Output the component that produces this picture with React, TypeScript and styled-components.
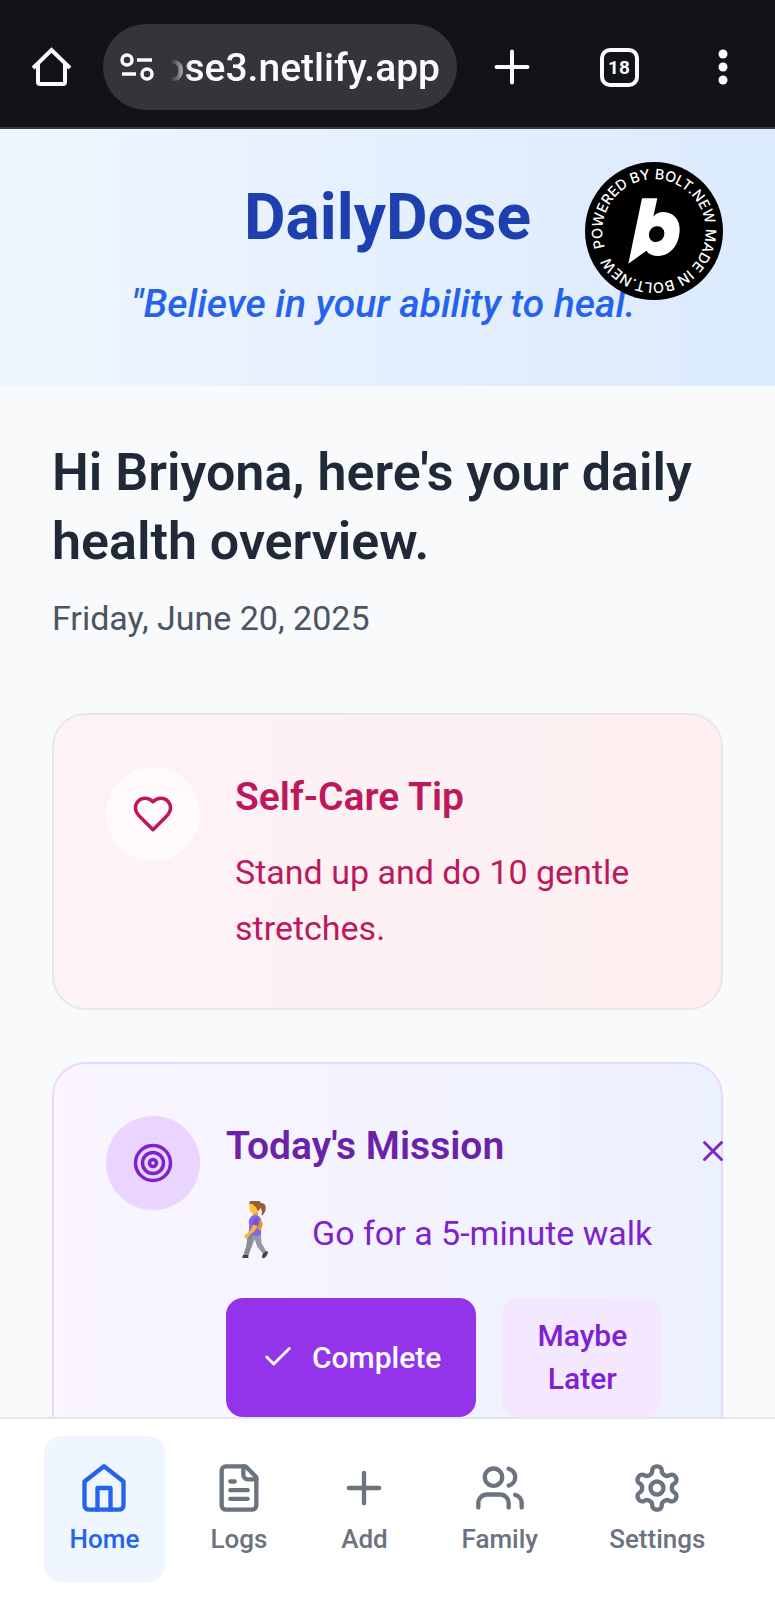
import React from "react";
import styled, { createGlobalStyle, css } from "styled-components";

const GlobalStyle = createGlobalStyle`
  *, *::before, *::after { box-sizing: border-box; }
  html, body { margin: 0; background: #f9fafb; }
  body, button, input { font-family: Roboto, "Liberation Sans", sans-serif; }
  h1, h2, h3, p { margin: 0; }
  button { border: 0; padding: 0; background: none; cursor: pointer; }
  svg { display: block; flex-shrink: 0; }
`;

const Screen = styled.div`
  display: flex;
  flex-direction: column;
  height: 100vh;
  overflow: hidden;
`;

/* Browser toolbar */

const Toolbar = styled.header`
  display: flex;
  align-items: center;
  flex-shrink: 0;
  padding: 24px 0 17px;
  background: #121318;
  border-bottom: 2px solid #393a40;
  color: #fbfaff;
`;

const ToolButton = styled.button<{ $width: number }>`
  display: flex;
  align-items: center;
  justify-content: center;
  flex-shrink: 0;
  width: ${(p) => p.$width}px;
  height: 86px;
  color: inherit;
`;

const AddressBar = styled.label`
  display: flex;
  align-items: center;
  flex: 1;
  min-width: 0;
  height: 86px;
  padding: 0 17px;
  gap: 17px;
  border-radius: 43px;
  background: #343539;
`;

const AddressClip = styled.span`
  display: flex;
  justify-content: flex-end;
  flex: 1;
  min-width: 0;
  overflow: hidden;
  mask-image: linear-gradient(to right, transparent 0, #000 20px);
`;

const AddressInput = styled.input`
  flex: 0 0 480px;
  width: 480px;
  border: 0;
  padding: 2px 0 0;
  outline: 0;
  background: none;
  color: inherit;
  font-size: 39px;
  line-height: 52px;
  font-weight: 500;
  text-align: right;
`;

const TabCount = styled.span`
  display: flex;
  align-items: center;
  justify-content: center;
  width: 39px;
  height: 39px;
  border: 4px solid currentColor;
  border-radius: 10px;
  font-size: 19px;
  font-weight: 700;
`;

/* Page */

const Page = styled.div`
  flex: 1;
  min-height: 0;
  overflow-y: auto;
  scrollbar-width: none;
  background: #f9fafb;
`;

const Banner = styled.div`
  position: relative;
  display: flex;
  flex-direction: column;
  gap: 17px;
  padding: 50px 52px 52px;
  background: linear-gradient(to right, #eff6ff, #dbeafe);
  text-align: center;
`;

const Brand = styled.h1`
  color: #1e40af;
  font-size: 64px;
  line-height: 78px;
  font-weight: 700;
`;

const Quote = styled.p`
  color: #2563eb;
  font-size: 39px;
  line-height: 60px;
  font-weight: 500;
  font-style: italic;
`;

const BadgeLink = styled.a`
  position: absolute;
  top: 33px;
  right: 52px;
`;

const Content = styled.main`
  display: flex;
  flex-direction: column;
  gap: 52px;
  padding: 52px;
`;

const Greeting = styled.div`
  display: flex;
  flex-direction: column;
  gap: 16px;
  padding-bottom: 17px;
`;

const GreetingTitle = styled.h2`
  color: #1f2937;
  font-size: 52px;
  line-height: 69px;
  font-weight: 600;
`;

const DateText = styled.p`
  color: #4b5563;
  font-size: 34px;
  line-height: 52px;
`;

const tones = {
  pink: {
    background: "linear-gradient(to right, #fdf2f8, #fef0f0)",
    border: "#e5e7eb",
    disc: "rgba(255, 255, 255, 0.7)",
    title: "#be185d",
    text: "#be185d",
    gap: 35,
  },
  purple: {
    background: "linear-gradient(to right, #faf5ff, #ecf1ff)",
    border: "#e9d8fb",
    disc: "#e9d5ff",
    title: "#6b21a8",
    text: "#7e22ce",
    gap: 26,
  },
};

type Tone = keyof typeof tones;

const Card = styled.section<{ $tone: Tone }>`
  display: flex;
  align-items: flex-start;
  gap: ${(p) => tones[p.$tone].gap}px;
  padding: 52px;
  border: 2px solid ${(p) => tones[p.$tone].border};
  border-radius: 34px;
  background: ${(p) => tones[p.$tone].background};
  color: ${(p) => tones[p.$tone].text};
`;

const Disc = styled.span<{ $tone: Tone }>`
  display: flex;
  flex-shrink: 0;
  padding: 26px;
  border-radius: 50%;
  background: ${(p) => tones[p.$tone].disc};
`;

const CardBody = styled.div`
  display: flex;
  flex-direction: column;
  flex: 1;
  min-width: 0;
  gap: 17px;
`;

const CardTitle = styled.h3<{ $tone: Tone }>`
  color: ${(p) => tones[p.$tone].title};
  font-size: 39px;
  line-height: 60px;
  font-weight: 600;
`;

const CardText = styled.p`
  font-size: 34px;
  line-height: 56px;
`;

const TitleRow = styled.div`
  display: flex;
  align-items: center;
  justify-content: space-between;
  margin-right: -61px;
`;

const CloseButton = styled.button`
  display: flex;
  margin: 9px 0 0;
  color: inherit;
`;

const MissionRow = styled.div`
  display: flex;
  align-items: center;
  gap: 26px;
  height: 80px;
`;

const Actions = styled.div`
  display: flex;
  gap: 26px;
  margin-top: 8px;
`;

const ActionButton = styled.button<{ $primary?: boolean }>`
  display: flex;
  align-items: center;
  justify-content: center;
  gap: 17px;
  padding: 16px 35px 17px;
  border-radius: 17px;
  font-size: 30px;
  line-height: 43px;
  font-weight: 500;
  ${(p) =>
    p.$primary
      ? css`
          background: #9333ea;
          color: #ffffff;
        `
      : css`
          width: 160px;
          background: #f3e8ff;
          color: #7e22ce;
        `}
`;

/* Bottom navigation */

const TabBar = styled.nav`
  display: flex;
  justify-content: space-around;
  flex-shrink: 0;
  padding: 17px 34px 18px;
  border-top: 2px solid #e5e7eb;
  background: #ffffff;
`;

const TabLink = styled.a<{ $active?: boolean }>`
  display: flex;
  flex-direction: column;
  align-items: center;
  gap: 8px;
  padding: 26px;
  border-radius: 17px;
  background: ${(p) => (p.$active ? "#eff6ff" : "transparent")};
  color: ${(p) => (p.$active ? "#2563eb" : "#6b7280")};
  font-size: 26px;
  line-height: 34px;
  font-weight: 500;
  text-decoration: none;
`;

const Icon = ({ size, children }: { size: number; children: React.ReactNode }) => (
  <svg
    width={size}
    height={size}
    viewBox="0 0 24 24"
    fill="none"
    stroke="currentColor"
    strokeWidth={2}
    strokeLinecap="round"
    strokeLinejoin="round"
    aria-hidden="true"
  >
    {children}
  </svg>
);

const BoltBadge = () => (
  <svg width="138" height="138" viewBox="77 65 414 414" role="img" aria-label="Powered by Bolt.new">
    <defs>
      <path id="ring" d="M 137.2 321.7 A 154.3 154.3 0 0 1 430.8 222.3 A 154.3 154.3 0 0 1 137.2 321.7" />
    </defs>
    <circle cx="284" cy="272" r="207" fill="#000" />
    <text fill="#fff" fontFamily="Inter, sans-serif" fontSize="43" fontWeight="500">
      <textPath href="#ring">POWERED BY BOLT.NEW MADE IN BOLT.NEW</textPath>
    </text>
    <path
      fill="#fff"
      fillRule="evenodd"
      d="M248 174H294L282 229C290 219 300 215 313 215C342 216 361 237 361 267C361 311 335 347 297 347C281 347 269 342 261 331L207 370ZM293 258C278 258 269 271 269 284C269 297 278 305 289 305C304 305 315 294 315 279C315 266 306 258 293 258Z"
    />
  </svg>
);

const WalkingWoman = () => (
  <svg width="60" height="64" viewBox="22 33 180 192" role="img" aria-label="Woman walking">
    <path d="M126 40C134 36 144 46 141 58C139 68 134 76 128 76C131 68 130 58 124 52Z" fill="#9a5b38" />
    <path d="M104 66H118V82H100Z" fill="#e5a52f" />
    <path d="M92 46C92 34 100 30 108 30C120 30 125 38 124 50C123 63 114 71 104 70C95 69 92 61 92 46Z" fill="#f9c43d" />
    <path d="M91 41C94 29 108 25 119 30C131 36 129 55 119 63C113 60 115 52 109 49C103 46 108 41 91 41Z" fill="#9a5b38" />
    <path d="M87 134L84 165L74 197H88L99 170L108 148L116 171L134 192L144 186L129 160L126 130L91 128Z" fill="#939aa5" />
    <path d="M100 134L99 168L89 197L74 197L84 165L87 132Z" fill="#858d98" />
    <path d="M73 195L89 195V204H71C71 200 72 197 73 195Z" fill="#3f4248" />
    <path d="M132 191L144 183L148 186C147 194 142 200 136 205L130 203Z" fill="#3f4248" />
    <path d="M105 76C119 73 128 82 128 94L127 134C117 139 98 138 90 133L92 106C88 94 92 80 105 76Z" fill="#8564e8" />
    <path d="M122 90C130 92 133 99 131 107L126 121L117 119Z" fill="#dc9b31" />
    <path d="M104 99L118 103C115 118 106 127 91 137L86 146C80 146 75 142 78 136L87 129C96 120 103 109 104 99Z" fill="#f4b93c" />
    <path d="M105 85C115 80 122 88 121 96L118 107L102 104Z" fill="#7656d5" />
  </svg>
);

export default function App() {
  return (
    <Screen>
      <GlobalStyle />
      <Toolbar>
        <ToolButton $width={103} aria-label="Home page">
          <svg width="40" height="40" viewBox="0 0 40 40" fill="none" stroke="currentColor" strokeWidth="4" strokeLinejoin="round" aria-hidden="true">
            <path d="M1 21L19.500 3L38 21" strokeLinejoin="miter" />
            <path d="M6 16V35Q6 37 8 37H31Q33 37 33 35V16" />
          </svg>
        </ToolButton>
        <AddressBar>
          <svg width="34" height="28" viewBox="0 0 34 28" fill="none" stroke="currentColor" strokeWidth="3.500" aria-hidden="true">
            <circle cx="7" cy="7" r="5" />
            <path d="M17 7H32M2 21H16" />
            <circle cx="27" cy="21" r="5" />
          </svg>
          <AddressClip>
            <AddressInput aria-label="Address" defaultValue="dailydose3.netlify.app" />
          </AddressClip>
        </AddressBar>
        <ToolButton $width={110} aria-label="New tab">
          <svg width="36" height="36" viewBox="0 0 36 36" stroke="currentColor" strokeWidth="4" strokeLinecap="round" aria-hidden="true">
            <path d="M18 2.500V33.500M2.500 18H33.500" />
          </svg>
        </ToolButton>
        <ToolButton $width={104} aria-label="Open tabs">
          <TabCount>18</TabCount>
        </ToolButton>
        <ToolButton $width={104} aria-label="Menu">
          <svg width="10" height="36" viewBox="0 0 10 36" fill="currentColor" aria-hidden="true">
            <circle cx="5" cy="5" r="4.500" />
            <circle cx="5" cy="18" r="4.500" />
            <circle cx="5" cy="31" r="4.500" />
          </svg>
        </ToolButton>
      </Toolbar>

      <Page>
        <Banner>
          <Brand>DailyDose</Brand>
          <Quote>"Believe in your ability to heal."</Quote>
          <BadgeLink href="#bolt">
            <BoltBadge />
          </BadgeLink>
        </Banner>

        <Content>
          <Greeting>
            <GreetingTitle>Hi Briyona, here's your daily health overview.</GreetingTitle>
            <DateText>Friday, June 20, 2025</DateText>
          </Greeting>

          <Card $tone="pink">
            <Disc $tone="pink">
              <Icon size={42}>
                <path d="M19 14c1.490-1.460 3-3.210 3-5.500A5.500 5.500 0 0 0 16.500 3c-1.760 0-3 .5-4.500 2-1.500-1.500-2.740-2-4.500-2A5.500 5.500 0 0 0 2 8.500c0 2.300 1.500 4.050 3 5.500l7 7Z" />
              </Icon>
            </Disc>
            <CardBody>
              <CardTitle $tone="pink">Self-Care Tip</CardTitle>
              <CardText>Stand up and do 10 gentle stretches.</CardText>
            </CardBody>
          </Card>

          <Card $tone="purple">
            <Disc $tone="purple">
              <Icon size={42}>
                <circle cx="12" cy="12" r="10" />
                <circle cx="12" cy="12" r="6" />
                <circle cx="12" cy="12" r="2" />
              </Icon>
            </Disc>
            <CardBody>
              <TitleRow>
                <CardTitle $tone="purple">Today's Mission</CardTitle>
                <CloseButton aria-label="Dismiss mission">
                  <Icon size={34}>
                    <path d="M18 6 6 18M6 6l12 12" />
                  </Icon>
                </CloseButton>
              </TitleRow>
              <MissionRow>
                <WalkingWoman />
                <CardText>Go for a 5-minute walk</CardText>
              </MissionRow>
              <Actions>
                <ActionButton $primary>
                  <Icon size={34}>
                    <path d="M20 6 9 17l-5-5" />
                  </Icon>
                  Complete
                </ActionButton>
                <ActionButton>Maybe Later</ActionButton>
              </Actions>
            </CardBody>
          </Card>
        </Content>
      </Page>

      <TabBar>
        <TabLink href="#home" $active aria-current="page">
          <Icon size={52}>
            <path d="m3 9 9-7 9 7v11a2 2 0 0 1-2 2H5a2 2 0 0 1-2-2z" />
            <path d="M9 22V12h6v10" />
          </Icon>
          Home
        </TabLink>
        <TabLink href="#logs">
          <Icon size={52}>
            <path d="M15 2H6a2 2 0 0 0-2 2v16a2 2 0 0 0 2 2h12a2 2 0 0 0 2-2V7Z" />
            <path d="M14 2v4a2 2 0 0 0 2 2h4M10 9H8M16 13H8M16 17H8" />
          </Icon>
          Logs
        </TabLink>
        <TabLink href="#add">
          <Icon size={52}>
            <path d="M5 12h14M12 5v14" />
          </Icon>
          Add
        </TabLink>
        <TabLink href="#family">
          <Icon size={52}>
            <path d="M16 21v-2a4 4 0 0 0-4-4H6a4 4 0 0 0-4 4v2" />
            <circle cx="9" cy="7" r="4" />
            <path d="M22 21v-2a4 4 0 0 0-3-3.870M16 3.130a4 4 0 0 1 0 7.750" />
          </Icon>
          Family
        </TabLink>
        <TabLink href="#settings">
          <Icon size={52}>
            <path d="M12.220 2h-.44a2 2 0 0 0-2 2v.18a2 2 0 0 1-1 1.730l-.43.25a2 2 0 0 1-2 0l-.15-.08a2 2 0 0 0-2.730.73l-.22.38a2 2 0 0 0 .73 2.730l.15.1a2 2 0 0 1 1 1.720v.51a2 2 0 0 1-1 1.740l-.15.09a2 2 0 0 0-.73 2.730l.22.38a2 2 0 0 0 2.730.73l.15-.08a2 2 0 0 1 2 0l.43.25a2 2 0 0 1 1 1.730V20a2 2 0 0 0 2 2h.44a2 2 0 0 0 2-2v-.18a2 2 0 0 1 1-1.730l.43-.25a2 2 0 0 1 2 0l.15.08a2 2 0 0 0 2.730-.73l.22-.39a2 2 0 0 0-.73-2.730l-.15-.08a2 2 0 0 1-1-1.740v-.5a2 2 0 0 1 1-1.740l.15-.09a2 2 0 0 0 .73-2.730l-.22-.38a2 2 0 0 0-2.730-.73l-.15.08a2 2 0 0 1-2 0l-.43-.25a2 2 0 0 1-1-1.730V4a2 2 0 0 0-2-2z" />
            <circle cx="12" cy="12" r="3" />
          </Icon>
          Settings
        </TabLink>
      </TabBar>
    </Screen>
  );
}
